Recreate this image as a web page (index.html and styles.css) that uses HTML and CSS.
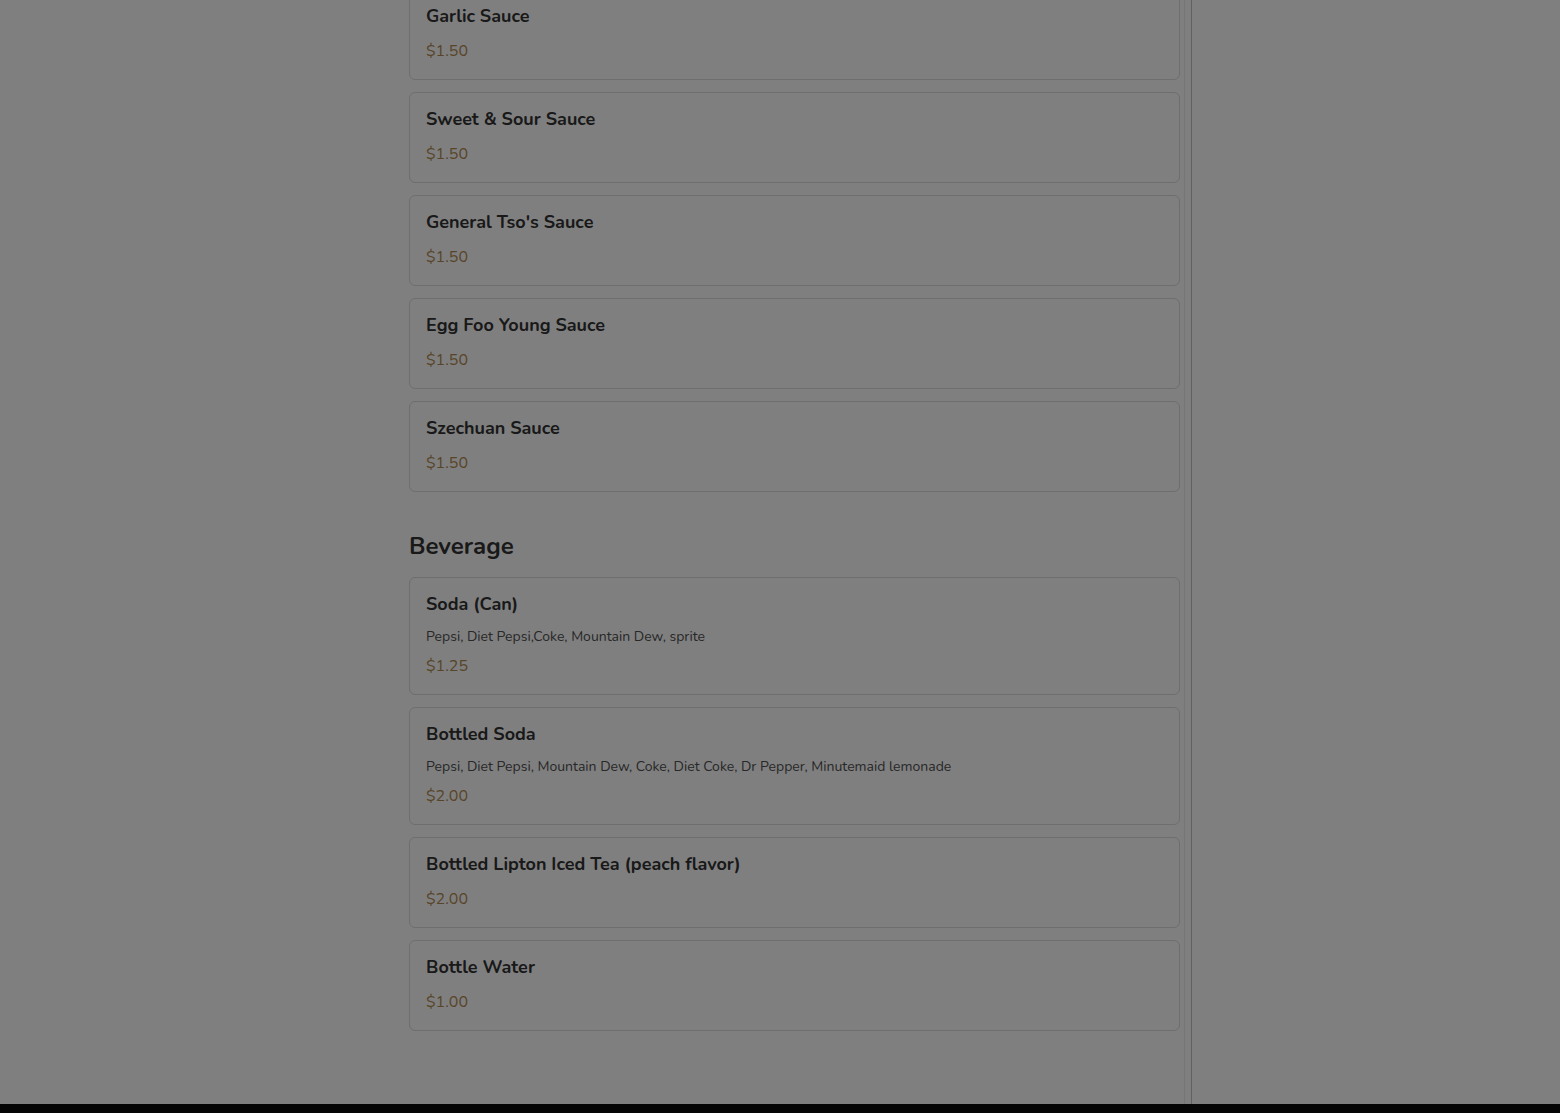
FILE: index.html
```html
<!DOCTYPE html>
<html lang="en">
<head>
<meta charset="utf-8">
<title>Menu</title>
<link rel="stylesheet" href="styles.css">
</head>
<body>
<div class="page">
  <main class="column">
    <div class="list first">
      <div class="card"><div class="name">Garlic Sauce</div><div class="price">$1.50</div></div>
      <div class="card"><div class="name">Sweet &amp; Sour Sauce</div><div class="price">$1.50</div></div>
      <div class="card"><div class="name">General Tso's Sauce</div><div class="price">$1.50</div></div>
      <div class="card"><div class="name">Egg Foo Young Sauce</div><div class="price">$1.50</div></div>
      <div class="card"><div class="name">Szechuan Sauce</div><div class="price">$1.50</div></div>
    </div>
    <section class="section">
      <h2 class="heading">Beverage</h2>
      <div class="list">
        <div class="card"><div class="name">Soda (Can)</div><div class="desc">Pepsi, Diet Pepsi,Coke, Mountain Dew, sprite</div><div class="price">$1.25</div></div>
        <div class="card"><div class="name">Bottled Soda</div><div class="desc">Pepsi, Diet Pepsi, Mountain Dew, Coke, Diet Coke, Dr Pepper, Minutemaid lemonade</div><div class="price">$2.00</div></div>
        <div class="card"><div class="name">Bottled Lipton Iced Tea (peach flavor)</div><div class="price">$2.00</div></div>
        <div class="card"><div class="name">Bottle Water</div><div class="price">$1.00</div></div>
      </div>
    </section>
  </main>
</div>
<div class="bottom-bar"></div>
<div class="overlay"></div>
</body>
</html>
```
FILE: styles.css
```css
html, body {
  margin: 0;
  padding: 0;
  height: 100%;
  overflow: hidden;
}
body {
  background: #ffffff;
  font-family: "Nunito", "Lato", "Noto Sans", sans-serif;
  color: #222222;
}
.page {
  display: flex;
  height: 100%;
}
.column {
  margin-left: 397px;
  width: 771px;
  padding: 0 11px 0 12px;
  border-right: 1px solid #c2c2c2;
  background: linear-gradient(to right, transparent calc(100% - 7px), #ececec calc(100% - 7px), #ececec calc(100% - 6px), transparent calc(100% - 6px));
  min-height: 100%;
}
.list {
  display: flex;
  flex-direction: column;
  gap: 12px;
}
.list.first {
  margin-top: -11px;
}
.card {
  border: 1px solid #dcdcdc;
  border-radius: 6px;
  padding: 14px 16px 17px 16px;
  display: flex;
  flex-direction: column;
}
.name {
  font-size: 18px;
  font-weight: 700;
  line-height: 25px;
  color: #333333;
  margin-bottom: 11px;
}
.desc {
  font-size: 14px;
  line-height: 18px;
  color: #505050;
  margin-bottom: 9px;
}
.price {
  font-size: 16px;
  line-height: 22px;
  color: #b08a52;
}
.section {
  margin-top: 38px;
}
.heading {
  margin: 0 0 15px 0;
  font-size: 24px;
  line-height: 32px;
  font-weight: 700;
  color: #333333;
}
.bottom-bar {
  position: fixed;
  left: 0;
  right: 0;
  bottom: 0;
  height: 9px;
  background: #0a0a0a;
}
.overlay {
  position: fixed;
  inset: 0;
  background: rgba(0, 0, 0, 0.5);
}
```
